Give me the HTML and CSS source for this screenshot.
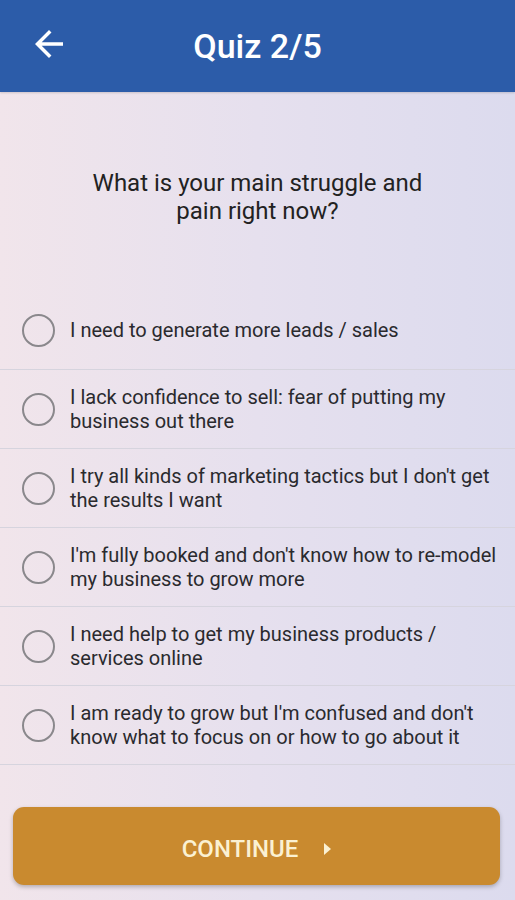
FILE: index.html
```html
<!DOCTYPE html>
<html>
<head>
<meta charset="utf-8">
<link rel="stylesheet" href="styles.css">
</head>
<body>
<div class="app">
  <header class="topbar">
    <button class="back" aria-label="Back">
      <svg viewBox="0 0 24 24" width="42" height="42"><path d="M20 11H7.83l5.59-5.59L12 4l-8 8 8 8 1.41-1.41L7.83 13H20v-2z" fill="#fff"/></svg>
    </button>
    <h1 class="title">Quiz 2/5</h1>
  </header>
  <main class="content">
    <p class="question">What is your main struggle and<br>pain right now?</p>
    <ul class="options">
      <li class="option"><span class="radio"></span><span class="label">I need to generate more leads / sales</span></li>
      <li class="option"><span class="radio"></span><span class="label">I lack confidence to sell: fear of putting my business out there</span></li>
      <li class="option"><span class="radio"></span><span class="label">I try all kinds of marketing tactics but I don't get the results I want</span></li>
      <li class="option"><span class="radio"></span><span class="label">I'm fully booked and don't know how to re-model my business to grow more</span></li>
      <li class="option"><span class="radio"></span><span class="label">I need help to get my business products / services online</span></li>
      <li class="option"><span class="radio"></span><span class="label">I am ready to grow but I'm confused and don't know what to focus on or how to go about it</span></li>
    </ul>
    <button class="continue">CONTINUE <span class="tri"></span></button>
  </main>
</div>
</body>
</html>
```
FILE: styles.css
```css
* { box-sizing: border-box; }
html, body { margin: 0; padding: 0; }
body {
  width: 515px;
  height: 900px;
  overflow: hidden;
  font-family: Roboto, "Liberation Sans", sans-serif;
  background: linear-gradient(90deg, #f1e5eb 0%, #e6e0ee 50%, #dcdbee 100%);
}
.app { display: flex; flex-direction: column; height: 900px; }
.topbar {
  height: 92px;
  background: #2c5ca9;
  display: flex;
  align-items: center;
  position: relative;
  box-shadow: 0 1px 2px rgba(0,0,0,0.15);
}
.back {
  background: none;
  border: 0;
  padding: 0;
  margin-left: 28px;
  margin-bottom: 4px;
  width: 42px;
  height: 42px;
  display: flex;
  position: relative;
  z-index: 1;
}
.title {
  margin: 0;
  position: absolute;
  left: 0;
  right: 0;
  text-align: center;
  color: #fff;
  font-size: 34px;
  font-weight: 500;
  pointer-events: none;
}
.content { display: flex; flex-direction: column; }
.question {
  margin: 77px 0 0;
  text-align: center;
  font-size: 24px;
  line-height: 28px;
  color: #222;
}
.options {
  list-style: none;
  margin: 66px 0 0;
  padding: 0;
}
.option {
  height: 79px;
  border-bottom: 1px solid #d6d4de;
  display: flex;
  align-items: center;
  padding-right: 8px;
}
.radio {
  flex: none;
  width: 33px;
  height: 33px;
  border: 2px solid #8a888c;
  border-radius: 50%;
  margin-left: 22px;
  margin-right: 15px;
}
.label {
  font-size: 20px;
  line-height: 24px;
  color: #2a2a2e;
}
.continue {
  margin: 42px 15px 0 13px;
  height: 78px;
  padding-top: 6px;
  border: 0;
  border-radius: 11px;
  background: #c98a2f;
  box-shadow: 0 2px 4px rgba(0,0,0,0.25);
  color: #fbf1d2;
  font-family: Roboto, "Liberation Sans", sans-serif;
  font-size: 24px;
  font-weight: 500;
  display: flex;
  align-items: center;
  justify-content: center;
  gap: 26px;
}
.tri {
  width: 0;
  height: 0;
  border-top: 6px solid transparent;
  border-bottom: 6px solid transparent;
  border-left: 7px solid #fbf1d2;
}
```
